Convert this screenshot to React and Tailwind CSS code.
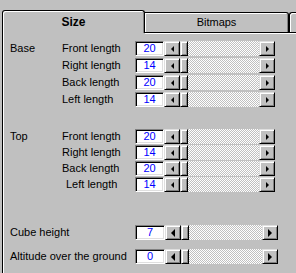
const raised =
  "border border-t-[#dfdfdf] border-l-[#dfdfdf] border-r-black border-b-black shadow-[inset_1px_1px_0_#fff,inset_-1px_-1px_0_#808080] bg-[#c0c0c0]";
const sunken =
  "border border-t-[#808080] border-l-[#808080] border-r-white border-b-white shadow-[inset_1px_1px_0_#000,inset_-1px_-1px_0_#dfdfdf] bg-white";

const ScrollBar = ({ big }) => (
  <div className={`flex h-[15px] ${big ? "w-[113px]" : "w-[111px]"}`}>
    <div className={`${raised} w-[16px] h-full flex items-center justify-center`}>
      <div
        className={
          big
            ? "w-0 h-0 border-y-[4px] border-y-transparent border-r-[4px] border-r-black"
            : "w-0 h-0 border-y-[3px] border-y-transparent border-r-[3px] border-r-black"
        }
      />
    </div>
    <div className={`${raised} w-[8px] h-full`} />
    <div className="flex-1 h-full bg-[repeating-conic-gradient(#fff_0_25%,#c0c0c0_0_50%)] bg-[length:2px_2px]" />
    <div className={`${raised} w-[16px] h-full flex items-center justify-center`}>
      <div
        className={
          big
            ? "w-0 h-0 border-y-[4px] border-y-transparent border-l-[4px] border-l-black"
            : "w-0 h-0 border-y-[3px] border-y-transparent border-l-[3px] border-l-black"
        }
      />
    </div>
  </div>
);

const Field = ({ value, big }) => (
  <div className="flex items-center">
    <div
      className={`${sunken} ${big ? "w-[30px]" : "w-[29px]"} h-[15px] flex items-center justify-center text-[#0000ff] leading-none`}
    >
      {value}
    </div>
    <ScrollBar big={big} />
  </div>
);

const Section = ({ title, rows, rowGap }) => (
  <div className="flex">
    <div className="w-[52px] h-[15px] flex items-center">{title}</div>
    <div className={`flex flex-col ${rowGap}`}>
      {rows.map(([label, value, indent]) => (
        <div key={label} className="flex items-center h-[15px]">
          <div className={`w-[73px] ${indent ? "pl-[4px]" : ""}`}>{label}</div>
          <Field value={value} />
        </div>
      ))}
    </div>
  </div>
);

export default function App() {
  return (
    <div className="w-[296px] h-[273px] bg-[#c0c0c0] overflow-hidden font-['Liberation_Sans',Arial,sans-serif] text-[11px] text-black pt-[10px] flex flex-col">
      <div className="flex items-end h-[23px] shrink-0">
        <div className="ml-[2px] w-[143px] h-[23px] border-t border-l border-r border-t-black border-l-black border-r-black rounded-t-[3px] shadow-[inset_1px_1px_0_#fff,inset_-1px_0_0_#808080] flex items-center justify-center font-bold text-[12px] pb-[1px] relative z-10">
          Size
        </div>
        <div className="w-[144px] h-[21px] border-t border-r border-b border-black rounded-tr-[3px] shadow-[inset_1px_1px_0_#fff,inset_-1px_0_0_#808080,0_1px_0_#fff] flex items-center justify-center">
          Bitmaps
        </div>
        <div className="flex-1 h-[21px] border-t border-l border-b border-black rounded-tl-[3px] shadow-[inset_1px_1px_0_#fff,0_1px_0_#fff]" />
      </div>
      <div className="flex-1 ml-[2px] border-l border-black shadow-[inset_1px_0_0_#fff] pl-[7px] pt-[8px] flex flex-col">
        <Section
          title="Base"
          rowGap="gap-[2px]"
          rows={[
            ["Front length", "20"],
            ["Right length", "14"],
            ["Back length", "20"],
            ["Left length", "14"],
          ]}
        />
        <div className="mt-[22px]">
          <Section
            title="Top"
            rowGap="gap-[1px]"
            rows={[
              ["Front length", "20"],
              ["Right length", "14"],
              ["Back length", "20"],
              ["Left length", "14", true],
            ]}
          />
        </div>
        <div className="mt-[33px] flex items-center h-[15px]">
          <div className="w-[125px]">Cube height</div>
          <Field value="7" big />
        </div>
        <div className="mt-[9px] flex items-center h-[15px]">
          <div className="w-[125px]">Altitude over the ground</div>
          <Field value="0" big />
        </div>
      </div>
    </div>
  );
}
